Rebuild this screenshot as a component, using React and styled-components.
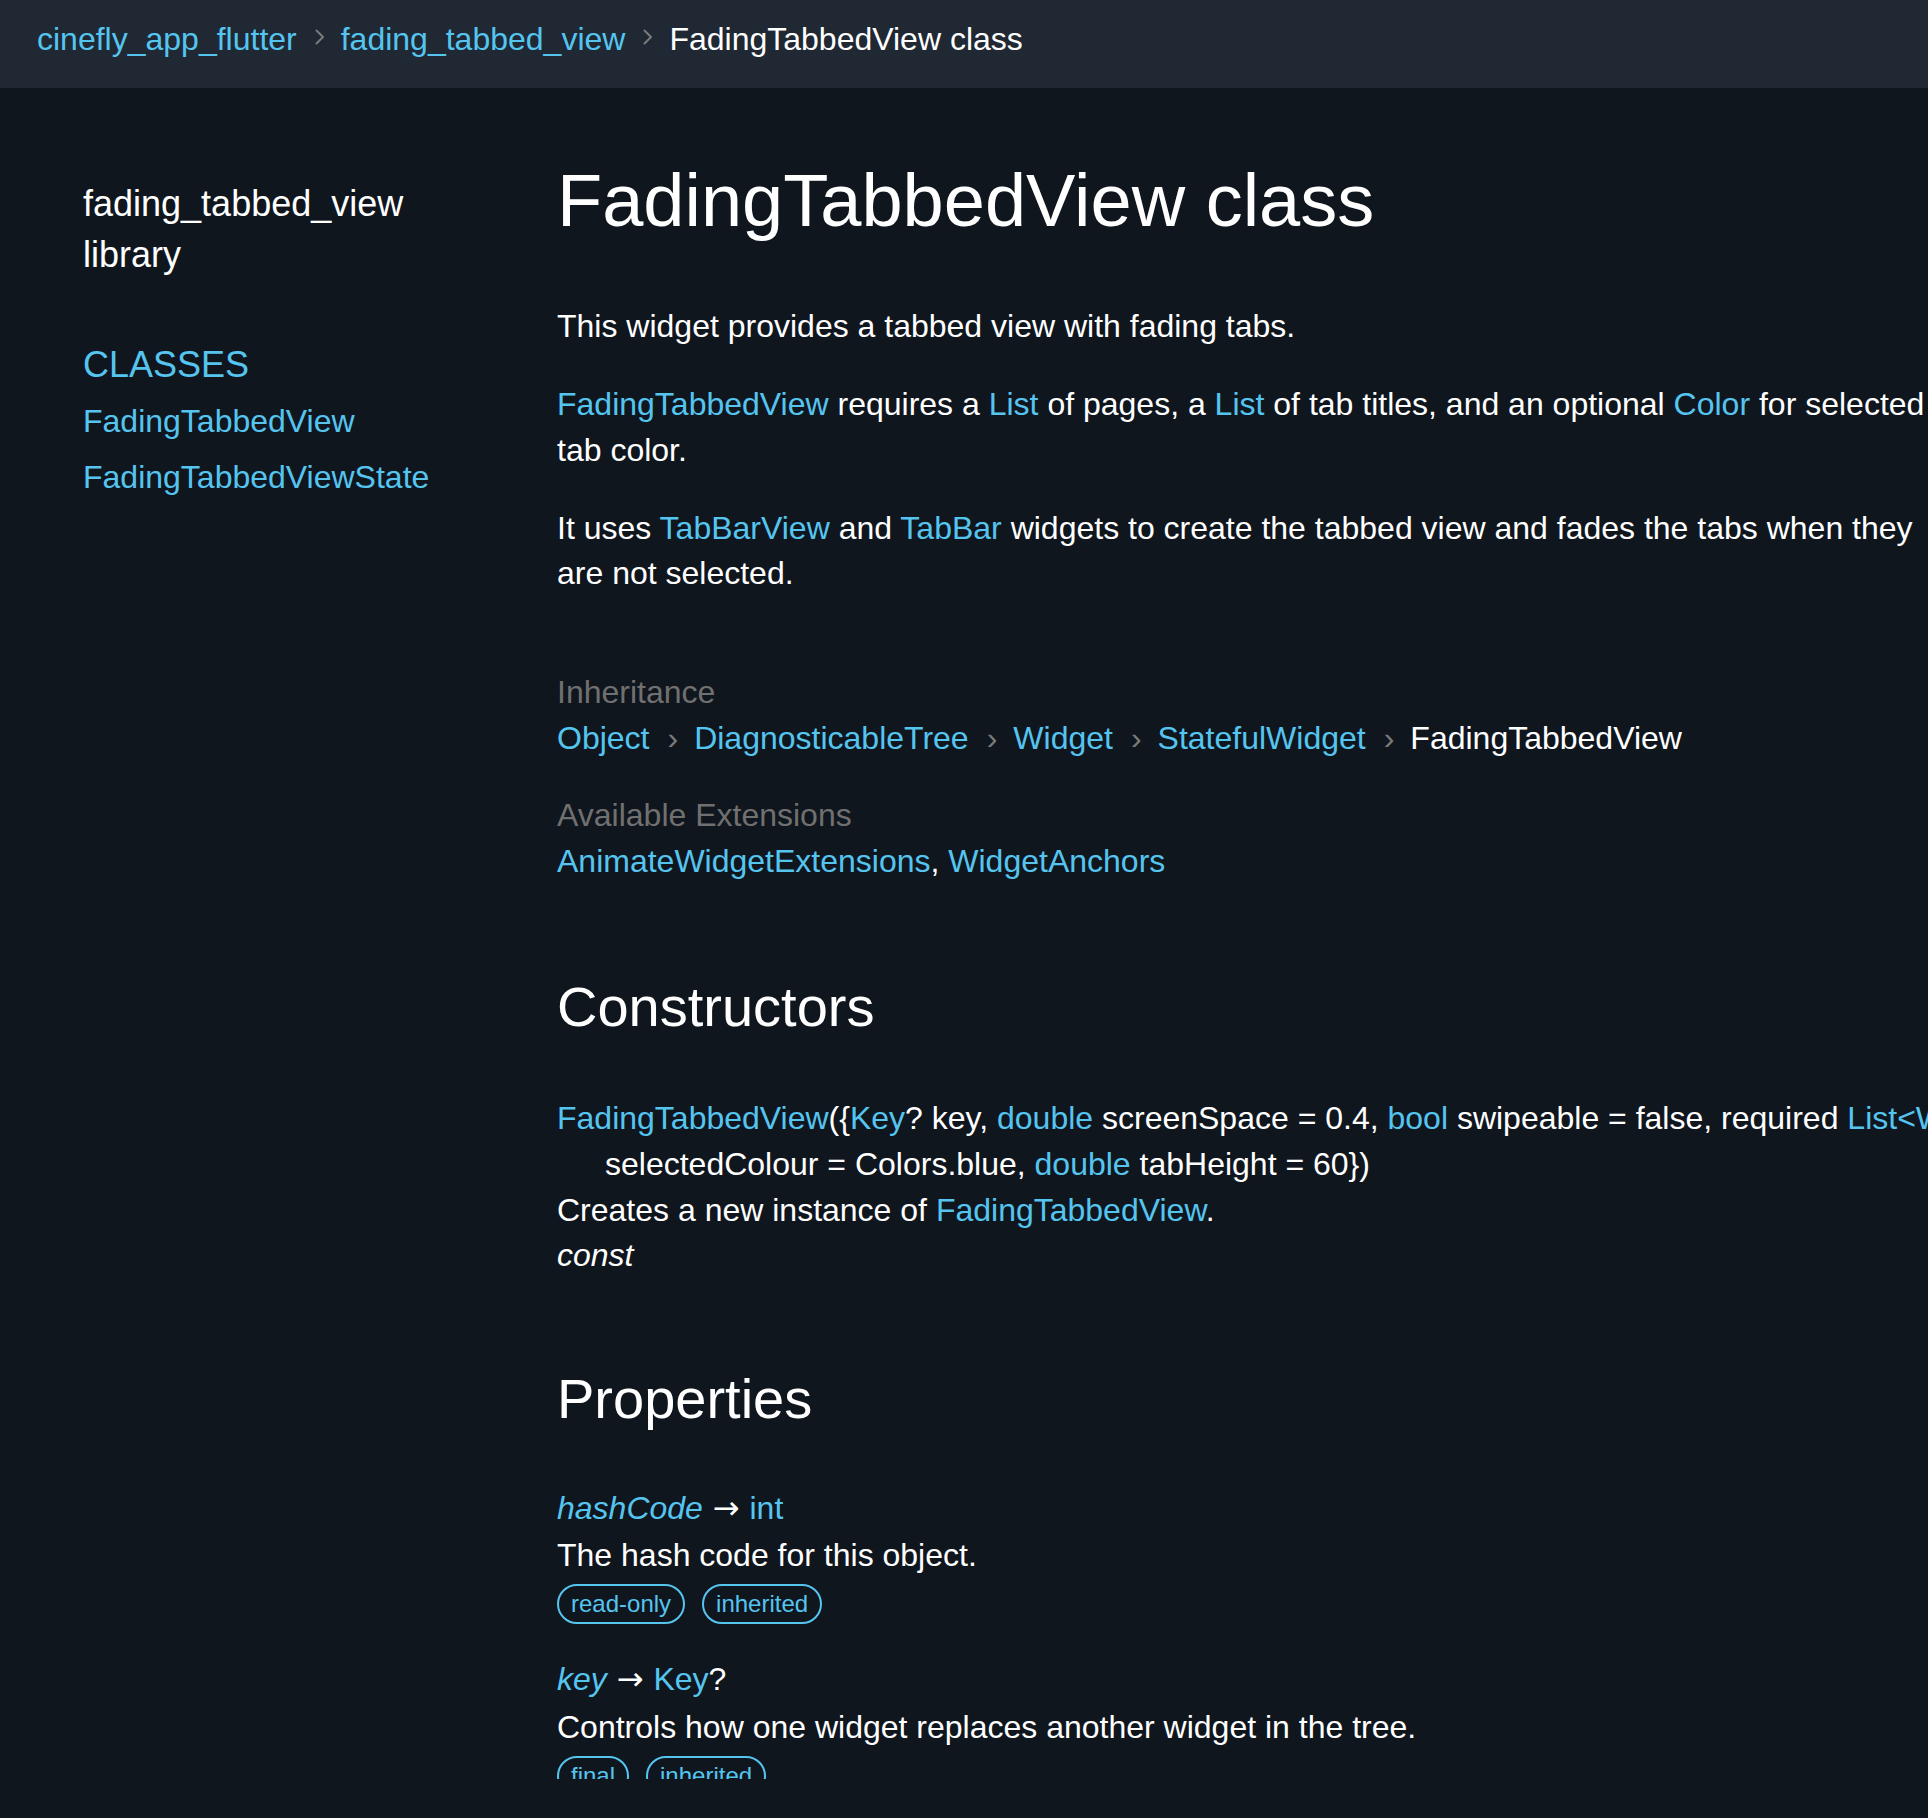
import React from "react";
import styled, { createGlobalStyle } from "styled-components";

const LINK = "#55c5f0";
const BG = "#10161e";
const HEADER_BG = "#1f2833";
const MUTED = "#707070";
const SEP = "#7a7a7a";

const GlobalStyle = createGlobalStyle`
  html, body {
    margin: 0;
    padding: 0;
    background: ${BG};
    overflow: hidden;
  }
  body {
    font-family: "Liberation Sans", Arial, Helvetica, sans-serif;
    color: #fff;
  }
  * { box-sizing: border-box; }
`;

const Page = styled.div`
  width: 100%;
  height: 1818px;
  overflow: hidden;
  background: ${BG};
`;

const Header = styled.header`
  height: 88px;
  background: ${HEADER_BG};
  padding: 21px 0 0 37px;
  font-size: 32px;
  line-height: 36px;
  white-space: nowrap;
`;

const Link = styled.a`
  color: ${LINK};
  text-decoration: none;
  font-style: ${(p) => (p.$italic ? "italic" : "normal")};
`;

const Current = styled.span`
  color: #fff;
`;

const CrumbSvg = styled.svg`
  width: 10px;
  height: 16px;
  margin: 0 16px 0 18px;
  vertical-align: 5px;
  overflow: visible;
`;

const CrumbSep = () => (
  <CrumbSvg viewBox="0 0 10 16">
    <path d="M1.5 1.5 L8 8 L1.5 14.5" fill="none" stroke={SEP} strokeWidth="2" strokeLinecap="round" strokeLinejoin="round" />
  </CrumbSvg>
);

const Body = styled.div`
  display: flex;
  height: 1691px;
  overflow: hidden;
`;

const Sidebar = styled.nav`
  flex: 0 0 557px;
  padding: 90px 0 0 83px;
`;

const LibTitle = styled.h5`
  margin: 0;
  width: 380px;
  font-size: 36px;
  line-height: 1.42857;
  font-weight: 400;
  color: #fff;
`;

const SideSection = styled.h5`
  margin: 58px 0 3px;
  font-size: 36px;
  line-height: 1.42857;
  font-weight: 400;
  color: ${LINK};
`;

const SideList = styled.ul`
  list-style: none;
  margin: 0;
  padding: 0;
`;

const SideItem = styled.li`
  font-size: 32px;
  line-height: 1.42857;
  padding: 5.5px 0;
  white-space: nowrap;
`;

const Main = styled.main`
  flex: 0 0 1800px;
  padding-top: 72px;
  font-size: 32px;
  line-height: 1.42857;
`;

const Title = styled.h1`
  margin: 0 0 63px;
  font-size: 74px;
  line-height: 1.1;
  font-weight: 400;
`;

const Desc = styled.section`
  max-width: 1398px;
  margin-bottom: 73px;
`;

const Para = styled.p`
  margin: 0 0 32px;
  &:last-child { margin-bottom: 0; }
`;

const Meta = styled.dl`
  margin: 0 0 91px;
`;

const MetaLabel = styled.dt`
  color: ${MUTED};
`;

const MetaValue = styled.dd`
  margin: 0 0 32px;
  &:last-child { margin-bottom: 0; }
`;

const Chain = styled.ul`
  list-style: none;
  margin: 0;
  padding: 0;
  white-space: nowrap;
`;

const ChainItem = styled.li`
  display: inline;
  color: #fff;
  &:not(:last-child)::after {
    content: "\\203A";
    color: ${SEP};
    margin: 0 16px 0 18px;
  }
`;

const SectionTitle = styled.h2`
  margin: 0 0 ${(p) => p.$gap || 54}px;
  font-size: 56px;
  line-height: 1.1;
  font-weight: 400;
`;

const ConstructorList = styled.dl`
  margin: 0 0 89px;
`;

const Signature = styled.dt`
  padding-left: 48px;
  text-indent: -48px;
  white-space: nowrap;
`;

const ConstructorDesc = styled.dd`
  margin: 0;
`;

const Italic = styled.div`
  font-style: italic;
`;

const PropertyList = styled.dl`
  margin: 0;
`;

const PropertyItem = styled.div`
  margin-bottom: 33px;
`;

const PropertyName = styled.dt`
  white-space: nowrap;
  margin-bottom: 2px;
`;

const Arrow = styled.span`
  font-family: "DejaVu Sans", sans-serif;
  color: #fff;
  margin: 0 1px;
`;

const PropertyDesc = styled.dd`
  margin: 0;
`;

const Badges = styled.div`
  display: flex;
  gap: 17px;
  margin-top: 5px;
`;

const Badge = styled.span`
  display: inline-block;
  font-size: 24px;
  line-height: 36px;
  padding: 0 12px;
  border: 2px solid ${LINK};
  border-radius: 20px;
  color: ${LINK};
`;

const properties = [
  { name: "hashCode", type: "int", nullable: false, desc: "The hash code for this object.", tags: ["read-only", "inherited"] },
  { name: "key", type: "Key", nullable: true, desc: "Controls how one widget replaces another widget in the tree.", tags: ["final", "inherited"] },
  { name: "runtimeType", type: "Type", nullable: false, desc: "A representation of the runtime type of the object.", tags: ["read-only", "inherited"] },
  { name: "screenSpace", type: "double", nullable: false, desc: "The fraction of the screen used by the tab bar.", tags: ["final"] },
];

export default function App() {
  return (
    <>
      <GlobalStyle />
      <Page>
        <Header>
          <Link href="#">cinefly_app_flutter</Link>
          <CrumbSep />
          <Link href="#">fading_tabbed_view</Link>
          <CrumbSep />
          <Current>FadingTabbedView class</Current>
        </Header>
        <Body>
          <Sidebar>
            <LibTitle>fading_tabbed_view library</LibTitle>
            <SideSection>CLASSES</SideSection>
            <SideList>
              <SideItem><Link href="#">FadingTabbedView</Link></SideItem>
              <SideItem><Link href="#">FadingTabbedViewState</Link></SideItem>
            </SideList>
          </Sidebar>
          <Main>
            <Title>FadingTabbedView class</Title>
            <Desc>
              <Para>This widget provides a tabbed view with fading tabs.</Para>
              <Para>
                <Link href="#">FadingTabbedView</Link> requires a <Link href="#">List</Link> of pages, a{" "}
                <Link href="#">List</Link> of tab titles, and an optional <Link href="#">Color</Link> for selected tab color.
              </Para>
              <Para>
                It uses <Link href="#">TabBarView</Link> and <Link href="#">TabBar</Link> widgets to create the tabbed view and
                fades the tabs when they are not selected.
              </Para>
            </Desc>
            <Meta>
              <MetaLabel>Inheritance</MetaLabel>
              <MetaValue>
                <Chain>
                  <ChainItem><Link href="#">Object</Link></ChainItem>
                  <ChainItem><Link href="#">DiagnosticableTree</Link></ChainItem>
                  <ChainItem><Link href="#">Widget</Link></ChainItem>
                  <ChainItem><Link href="#">StatefulWidget</Link></ChainItem>
                  <ChainItem>FadingTabbedView</ChainItem>
                </Chain>
              </MetaValue>
              <MetaLabel>Available Extensions</MetaLabel>
              <MetaValue>
                <Link href="#">AnimateWidgetExtensions</Link>, <Link href="#">WidgetAnchors</Link>
              </MetaValue>
            </Meta>

            <SectionTitle $gap={59}>Constructors</SectionTitle>
            <ConstructorList>
              <Signature>
                <Link href="#">FadingTabbedView</Link>({"{"}<Link href="#">Key</Link>? key, <Link href="#">double</Link> screenSpace = 0.4,{" "}
                <Link href="#">bool</Link> swipeable = false, required <Link href="#">List</Link>
                <Link href="#">&lt;Widget&gt;</Link> children, required <Link href="#">List</Link>
                <Link href="#">&lt;String&gt;</Link> tabs, <Link href="#">Color</Link>
                <br />
                selectedColour = Colors.blue, <Link href="#">double</Link> tabHeight = 60{"}"})
              </Signature>
              <ConstructorDesc>
                Creates a new instance of <Link href="#">FadingTabbedView</Link>.
                <Italic>const</Italic>
              </ConstructorDesc>
            </ConstructorList>

            <SectionTitle $gap={56}>Properties</SectionTitle>
            <PropertyList>
              {properties.map((p) => (
                <PropertyItem key={p.name}>
                  <PropertyName>
                    <Link href="#" $italic>{p.name}</Link> <Arrow>→</Arrow> <Link href="#">{p.type}</Link>
                    {p.nullable ? "?" : ""}
                  </PropertyName>
                  <PropertyDesc>
                    {p.desc}
                    <Badges>
                      {p.tags.map((t) => (
                        <Badge key={t}>{t}</Badge>
                      ))}
                    </Badges>
                  </PropertyDesc>
                </PropertyItem>
              ))}
            </PropertyList>
          </Main>
        </Body>
      </Page>
    </>
  );
}
